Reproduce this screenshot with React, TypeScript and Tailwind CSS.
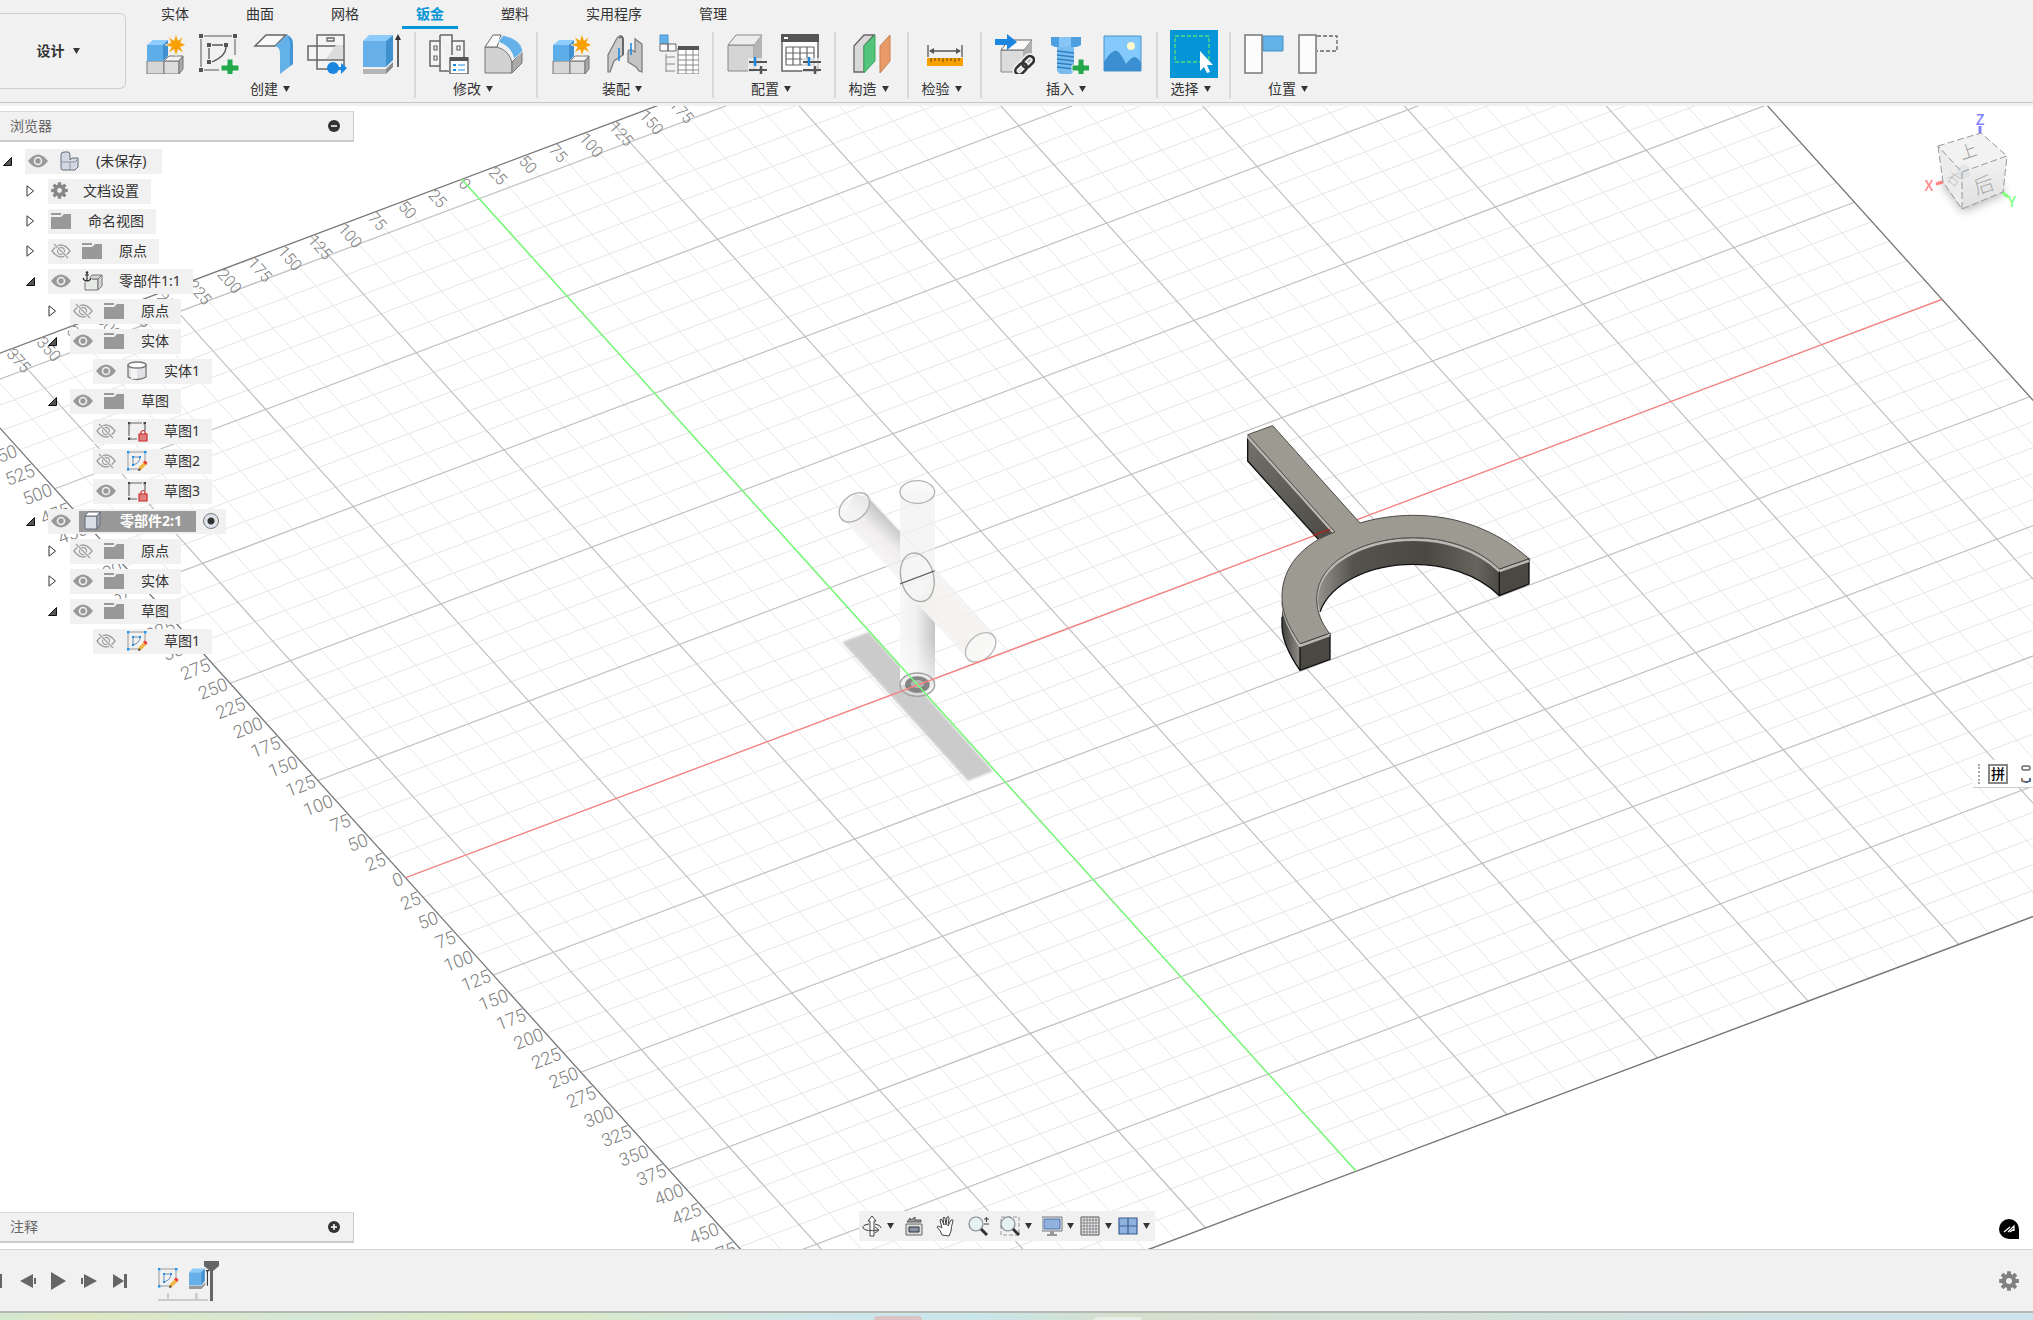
import { useState, type ReactNode } from 'react';
import { clsx } from 'clsx';

const FONT = "font-['Noto_Sans',_'Noto_Sans_CJK_SC',sans-serif]";

/* ---------- ribbon icons, all on a 40px grid ---------- */

function Box40({ children }: { children: ReactNode }) {
  return (
    <svg viewBox="0 0 40 40" className="h-10 w-10" fill="none" aria-hidden="true">
      {children}
    </svg>
  );
}

const Plus = ({ x, y }: { x: number; y: number }) => (
  <path
    d={`M${x - 3} ${y - 9}h6v6h6v6h-6v6h-6v-6h-6v-6h6z`}
    fill="#23a94b"
    stroke="#f1f1f1"
    strokeWidth="1"
  />
);

function NewComponentIcon() {
  return (
    <Box40>
      <path d="M2 27h17v13H2z" fill="#d6d6d6" stroke="#777" />
      <path d="M19 27h15v13H19z" fill="#dcdcdc" stroke="#777" />
      <path d="M19 27l5-5h14l-4 5z" fill="#f2f2f2" stroke="#777" />
      <path d="M34 27l4-5v13l-4 5z" fill="#aaa" stroke="#777" />
      <path d="M2 11h16v16H2z" fill="#5dade8" />
      <path d="M2 11l6-5h15l-5 5z" fill="#90cdff" />
      <path d="M18 11l5-5v16l-5 5z" fill="#3d8fd0" />
      <path
        d="M31 0l2 6.500 5-3.500-2.500 5.500L41 11l-5.500 2 3 5.500-5.500-3L31 22l-2-6.500-5.500 3 3-5.500L20 11l6-2.500L23.500 3l5.500 3.500z"
        fill="#f7a000"
        stroke="#f1f1f1"
        strokeWidth=".6"
      />
    </Box40>
  );
}

function SketchIcon() {
  return (
    <Box40>
      <path d="M5 2h28M2 5v28M5 36h15M36 5v16" stroke="#555" />
      <path d="M13 11h11M10 14v11M27 13q0 9-14 15" stroke="#555" strokeWidth="1.300" />
      <path d="M0 0h4v4H0zM34 0h4v4h-4zM0 34h4v4H0zM8 9h4v4H8zM25 9h4v4h-4zM8 26h4v4H8z" fill="#555" />
      <Plus x={31} y={34} />
    </Box40>
  );
}

function FlangeIcon() {
  return (
    <Box40>
      <path d="M2 12L13 1h20L22 12z" fill="#fafafa" stroke="#666" strokeWidth="1.500" />
      <path d="M22 12L34 1q6 2 6 10v19L27 40V20q0-7-5-8z" fill="#64b0e8" />
      <path d="M34 1q6 2 6 10v19l-3 2V11q0-7-3-10z" fill="#4596d6" />
    </Box40>
  );
}

function UnfoldIcon() {
  return (
    <Box40>
      <path d="M10 1h27v34H10zM1 12h36v14H1zM10 12v14" fill="#f4f4f4" stroke="#666" strokeWidth="1.500" />
      <path d="M19 25l10-14h7v14z" fill="#dcdcdc" />
      <path d="M20 4h7v3h-7z" stroke="#666" strokeWidth="1.300" />
      <circle cx="26" cy="34" r="6" fill="#1a86e0" />
      <path d="M30 33h4v-4l6 5-6 6v-4h-4z" fill="#1a86e0" />
    </Box40>
  );
}

function ExtrudeIcon() {
  return (
    <Box40>
      <path d="M2 35h23v5H2z" fill="#b5b5b5" />
      <path d="M25 35l7-7v5l-7 7z" fill="#8a8a8a" />
      <path d="M2 7h23v26H2z" fill="#66afe8" />
      <path d="M2 7l6-6h24l-7 6z" fill="#8dccfa" />
      <path d="M25 7l7-6v25l-7 7z" fill="#3f90cf" />
      <path d="M37 4v29" stroke="#333" strokeWidth="1.500" />
      <path d="M37 0l3 6h-6z" fill="#333" />
    </Box40>
  );
}

function RulesIcon() {
  return (
    <Box40>
      <path d="M11 1h12v6h12v16M11 1v6H1v25h10v5h9" fill="#f5f5f5" stroke="#666" strokeWidth="1.500" />
      <path d="M11 7v25M23 7v14" stroke="#666" strokeWidth="1.500" />
      <path d="M5 12h3v4H5zM5 22h3v4H5zM28 12h3v4h-3z" stroke="#666" strokeWidth="1.200" />
      <path d="M21 24h18v16H21z" fill="#fff" stroke="#666" strokeWidth="1.500" />
      <path d="M21 23h18v4H21z" fill="#555" />
      <path d="M24 31h3M24 36h3" stroke="#1a86e0" strokeWidth="2" />
      <path d="M29 31h7M29 36h7" stroke="#1a86e0" />
    </Box40>
  );
}

function BendIcon() {
  return (
    <Box40>
      <path d="M2 39V13h12q13 4 15 16v10z" fill="#d2d2d2" stroke="#777" />
      <path d="M2 13L10 1h8l-4 12z" fill="#fafafa" stroke="#666" />
      <path d="M29 28l10-10v11L29 39z" fill="#aaa" stroke="#777" />
      <path d="M15 8l5-7q18 4 20 16l-9 8Q28 12 15 8z" fill="#64b0e8" stroke="#f1f1f1" />
    </Box40>
  );
}

function JointIcon() {
  return (
    <Box40>
      <path d="M3 38V21L12 4q4-5 6 0v17l-9 6-4 11z" fill="#ccc" stroke="#777" strokeWidth="1.200" />
      <path d="M14 4q4-3 4 2v15" stroke="#555" strokeWidth="1.500" />
      <path d="M37 38V10l-7-5v13q-7-5-7 1v9l8 5 3 4z" fill="#c4c4c4" stroke="#777" strokeWidth="1.200" />
      <path d="M14 14v13M26 9v12" stroke="#1a86e0" strokeWidth="1.500" />
    </Box40>
  );
}

function BomIcon() {
  return (
    <Box40>
      <path d="M1 1h8v9H1z" fill="#64b0e8" stroke="#4b93ca" />
      <path d="M1 10h8v7H1zM9 10h8v7H9z" fill="#fafafa" stroke="#666" />
      <path d="M7 20v18M7 23h9M7 30h9M7 37h9" stroke="#888" />
      <path d="M19 14h21v26H19z" fill="#fff" stroke="#777" />
      <path d="M19 12h21v4H19z" fill="#555" />
      <path d="M19 21h21M19 26h21M19 31h21M19 36h21M27 16v24M34 16v24" stroke="#888" />
    </Box40>
  );
}

function Sliders({ x, y }: { x: number; y: number }) {
  return (
    <g transform={`translate(${x} ${y})`}>
      <path d="M-1-1h20v14H-1z" fill="#f1f1f1" opacity=".7" />
      <path d="M0 3h18M0 11h18" stroke="#555" strokeWidth="1.800" />
      <path d="M6-2v9" stroke="#1a86e0" strokeWidth="2.500" />
      <path d="M12 7v8" stroke="#555" strokeWidth="2.500" />
    </g>
  );
}

function ConfigBodyIcon() {
  return (
    <Box40>
      <path d="M1 11h26v26H1z" fill="#d5d5d5" stroke="#888" />
      <path d="M1 11L9 1h26l-8 10z" fill="#ededed" stroke="#888" />
      <path d="M27 11l8-10v26l-8 10z" fill="#b5b5b5" />
      <Sliders x={22} y={25} />
    </Box40>
  );
}

function ConfigTableIcon() {
  return (
    <Box40>
      <path d="M1 1h36v36H1z" fill="#fff" stroke="#666" strokeWidth="1.500" />
      <path d="M0 0h38v8H0z" fill="#555" />
      <path d="M3 3h4v2H3z" fill="#fff" />
      <path d="M5 13h28v18H5zM5 19h28M5 25h28M12 13v18M19 13v18M26 13v18" stroke="#666" strokeWidth="1.200" />
      <Sliders x={22} y={25} />
    </Box40>
  );
}

function PlaneIcon() {
  return (
    <Box40>
      <path d="M2 12L12 1h10L12 12v26H2z" fill="#d9d9d9" stroke="#666" strokeWidth="1.300" />
      <path d="M12 12L23 1v26L12 39z" fill="#53c57a" stroke="#3ca862" />
      <path d="M28 12L38 1v26L28 39z" fill="#e89a67" stroke="#c97f50" />
    </Box40>
  );
}

function MeasureIcon() {
  return (
    <Box40>
      <path d="M3 11v12M37 11v12M5 17h30" stroke="#555" strokeWidth="1.300" />
      <path d="M4 17l5-3v6zM36 17l-5-3v6z" fill="#555" />
      <path d="M2 24h36v8H2z" fill="#f7a000" />
      <path d="M6 24v4M10 24v3M14 24v3M18 24v4M22 24v3M26 24v3M30 24v4M34 24v3" stroke="#6b4700" />
    </Box40>
  );
}

function DeriveIcon() {
  return (
    <Box40>
      <path d="M6 16h23v22H6z" fill="#dcdcdc" stroke="#888" />
      <path d="M6 16L14 6h23l-8 10z" fill="#fafafa" stroke="#666" />
      <path d="M29 16l8-10v20l-8 12z" fill="#b0b0b0" />
      <path d="M0 5h12V0l10 8-10 8v-5H0z" fill="#1a86e0" />
      <g transform="rotate(-45 30 31)" stroke="#f1f1f1" strokeWidth="6">
        <rect x="18" y="27" width="13" height="8" rx="4" />
        <rect x="28" y="27" width="13" height="8" rx="4" />
      </g>
      <g transform="rotate(-45 30 31)" stroke="#333" strokeWidth="2.600">
        <rect x="18" y="27" width="13" height="8" rx="4" />
        <rect x="28" y="27" width="13" height="8" rx="4" />
      </g>
    </Box40>
  );
}

function FastenerIcon() {
  return (
    <Box40>
      <path d="M2 3h30v8l-4 2H6l-4-2z" fill="#4d9fdf" />
      <path d="M10 3h12v10H10z" fill="#86c5f5" />
      <path d="M8 13h17v24l-3 3H11l-3-3z" fill="#79bcf0" />
      <path d="M8 17l17 2M8 21l17 2M8 25l17 2M8 29l17 2M8 33l17 2" stroke="#2f80c0" strokeWidth="1.400" />
      <Plus x={32} y={34} />
    </Box40>
  );
}

function CanvasIcon() {
  return (
    <Box40>
      <path d="M1 2h37v35H1z" fill="#83c9fb" stroke="#4b93ca" />
      <path d="M1 28q8-13 13-11 3 1 9 13 6-8 9-7 3 1 6 5v9H1z" fill="#3c8fd0" />
      <circle cx="28" cy="12" r="4" fill="#fdf9cf" />
    </Box40>
  );
}

function SelectIcon() {
  return (
    <Box40>
      <path d="M1 2h34v26H1z" stroke="#54dc80" strokeWidth="1.400" strokeDasharray="4 2" />
      <path d="M26 17v20l4-4 3 6 3-1-3-7h6z" fill="#fff" />
    </Box40>
  );
}

const AlignIcon = ({ dashed }: { dashed?: boolean }) => (
  <Box40>
    {dashed ? (
      <path d="M19 2h20v15H19" stroke="#666" strokeWidth="1.300" strokeDasharray="4 2" />
    ) : (
      <path d="M19 2h20v15H19z" fill="#64b0e8" stroke="#4b93ca" />
    )}
    <path d="M1 1h17v38H1z" fill="#fcfcfc" stroke="#777" strokeWidth="1.500" />
  </Box40>
);

/* ---------- ribbon ---------- */

const TABS = ['实体', '曲面', '网格', '钣金', '塑料', '实用程序', '管理'];

const GROUPS: { label: string; tools: { name: string; icon: ReactNode; on?: boolean }[] }[] = [
  {
    label: '创建',
    tools: [
      { name: '新建零部件', icon: <NewComponentIcon /> },
      { name: '创建草图', icon: <SketchIcon /> },
      { name: '凸缘', icon: <FlangeIcon /> },
      { name: '展开模式', icon: <UnfoldIcon /> },
      { name: '拉伸', icon: <ExtrudeIcon /> },
    ],
  },
  {
    label: '修改',
    tools: [
      { name: '钣金规则', icon: <RulesIcon /> },
      { name: '圆角', icon: <BendIcon /> },
    ],
  },
  {
    label: '装配',
    tools: [
      { name: '新建零部件', icon: <NewComponentIcon /> },
      { name: '联接', icon: <JointIcon /> },
      { name: '明细表', icon: <BomIcon /> },
    ],
  },
  {
    label: '配置',
    tools: [
      { name: '配置设计', icon: <ConfigBodyIcon /> },
      { name: '配置表', icon: <ConfigTableIcon /> },
    ],
  },
  { label: '构造', tools: [{ name: '偏移平面', icon: <PlaneIcon /> }] },
  { label: '检验', tools: [{ name: '测量', icon: <MeasureIcon /> }] },
  {
    label: '插入',
    tools: [
      { name: '插入衍生', icon: <DeriveIcon /> },
      { name: '插入紧固件', icon: <FastenerIcon /> },
      { name: '画布', icon: <CanvasIcon /> },
    ],
  },
  { label: '选择', tools: [{ name: '窗口选择', icon: <SelectIcon />, on: true }] },
  {
    label: '位置',
    tools: [
      { name: '捕获位置', icon: <AlignIcon /> },
      { name: '还原位置', icon: <AlignIcon dashed /> },
    ],
  },
];

const Caret = ({ className }: { className?: string }) => (
  <svg viewBox="0 0 8 7" className={clsx('h-[6px] w-[7px] shrink-0', className)} aria-hidden="true">
    <path d="M0 0h8L4 7z" fill="#333" />
  </svg>
);

function Ribbon() {
  const [tab, setTab] = useState('钣金');
  return (
    <header className="h-[106px] shrink-0 bg-[#f1f1f1] pb-[3px]">
      <div className="flex h-[103px] border-b border-[#c8c8c8]">
        <button
          type="button"
          className="-ml-px mt-[13px] flex h-[76px] w-[127px] shrink-0 items-center justify-center gap-2 rounded-r-md border border-l-0 border-[#cfcfcf] pr-2 text-sm font-semibold text-[#333]"
        >
          设计
          <Caret />
        </button>
        <div className="ml-[6px] flex flex-col">
          <nav className="ml-[15px] flex h-[30px] gap-[29px]">
            {TABS.map((t) => (
              <button
                key={t}
                type="button"
                onClick={() => setTab(t)}
                className={clsx(
                  'h-[29px] whitespace-nowrap border-b-[3px] px-[14px] pt-[2px] text-sm',
                  t === tab
                    ? 'border-[#0696d7] font-semibold text-[#0696d7]'
                    : 'border-transparent text-[#333]',
                )}
              >
                {t}
              </button>
            ))}
          </nav>
          <div className="mt-[2px] flex">
            {GROUPS.map((g, i) => (
              <section
                key={g.label}
                className={clsx(
                  'flex h-[66px] flex-col items-center',
                  g.tools.length === 1 ? 'w-[73px]' : 'px-[6px]',
                  i < GROUPS.length - 1 && 'border-r-2 border-[#d8d8d8]',
                )}
              >
                <div className="flex h-[44px]">
                  {g.tools.map((t, n) => (
                    <button
                      key={n}
                      type="button"
                      aria-label={t.name}
                      className="flex h-[44px] w-[54px] items-center justify-center"
                    >
                      <span
                        className={clsx(
                          'flex h-12 w-12 shrink-0 items-center justify-center',
                          t.on && 'bg-[#0696d7]',
                        )}
                      >
                        {t.icon}
                      </span>
                    </button>
                  ))}
                </div>
                <button type="button" className="mr-[6px] mt-[3px] flex items-center gap-[5px] text-sm text-[#333]">
                  {g.label}
                  <Caret />
                </button>
              </section>
            ))}
          </div>
        </div>
      </div>
    </header>
  );
}

/* ---------- browser tree ---------- */

type Glyph = 'doc' | 'gear' | 'folder' | 'anchor' | 'body' | 'locked' | 'sketch' | 'part';

type Row = {
  level: 0 | 1 | 2 | 3;
  text: string;
  glyph: Glyph;
  open?: boolean;
  eye?: 'on' | 'off';
  active?: boolean;
};

const ROWS: Row[] = [
  { level: 0, text: '(未保存)', glyph: 'doc', open: true, eye: 'on' },
  { level: 1, text: '文档设置', glyph: 'gear', open: false },
  { level: 1, text: '命名视图', glyph: 'folder', open: false },
  { level: 1, text: '原点', glyph: 'folder', open: false, eye: 'off' },
  { level: 1, text: '零部件1:1', glyph: 'anchor', open: true, eye: 'on' },
  { level: 2, text: '原点', glyph: 'folder', open: false, eye: 'off' },
  { level: 2, text: '实体', glyph: 'folder', open: true, eye: 'on' },
  { level: 3, text: '实体1', glyph: 'body', eye: 'on' },
  { level: 2, text: '草图', glyph: 'folder', open: true, eye: 'on' },
  { level: 3, text: '草图1', glyph: 'locked', eye: 'off' },
  { level: 3, text: '草图2', glyph: 'sketch', eye: 'off' },
  { level: 3, text: '草图3', glyph: 'locked', eye: 'on' },
  { level: 1, text: '零部件2:1', glyph: 'part', open: true, eye: 'on', active: true },
  { level: 2, text: '原点', glyph: 'folder', open: false, eye: 'off' },
  { level: 2, text: '实体', glyph: 'folder', open: false, eye: 'on' },
  { level: 2, text: '草图', glyph: 'folder', open: true, eye: 'on' },
  { level: 3, text: '草图1', glyph: 'sketch', eye: 'off' },
];

const INDENT = ['pl-[3px]', 'pl-[26px]', 'pl-[48px]', 'pl-[71px]'];

function Eye({ off }: { off?: boolean }) {
  return (
    <svg viewBox="0 0 20 16" className="h-4 w-5" fill="none" aria-hidden="true">
      {off ? (
        <>
          <path d="M1 8q9-12 18 0-9 12-18 0z" stroke="#a0a0a0" strokeWidth="1.300" />
          <circle cx="10" cy="8" r="3.500" stroke="#a0a0a0" strokeWidth="1.300" />
          <path d="M3 1l14 14" stroke="#f1f1f1" strokeWidth="3" />
          <path d="M3 1l14 14" stroke="#a0a0a0" strokeWidth="1.300" />
        </>
      ) : (
        <>
          <path d="M0 8q10-13 20 0-10 13-20 0z" fill="#999" />
          <circle cx="10" cy="8" r="3.500" stroke="#f1f1f1" strokeWidth="1.600" />
        </>
      )}
    </svg>
  );
}

function gearPath(cx: number, cy: number, r: number, hole: number) {
  const pts: string[] = [];
  for (let i = 0; i < 8; i++) {
    const a = (i * Math.PI) / 4;
    [[-0.28, 0.72], [-0.19, 1], [0.19, 1], [0.28, 0.72]].forEach(([d, k]) =>
      pts.push(`${(cx + Math.sin(a + d) * r * k).toFixed(2)} ${(cy - Math.cos(a + d) * r * k).toFixed(2)}`),
    );
  }
  return `M${pts.join('L')}ZM${cx - hole} ${cy}a${hole} ${hole} 0 1 0 ${2 * hole} 0a${hole} ${hole} 0 1 0 ${-2 * hole} 0z`;
}

const TREE_GLYPHS: Record<Glyph, ReactNode> = {
  doc: (
    <>
      <path d="M2 4q0-3 3-3h4q2 0 2 3v5l2-2h6v9l-3 3H4q-2 0-2-2z" fill="#d3d8e3" stroke="#666c7a" />
      <path d="M2 11h9v8M11 11h5l3-3" stroke="#8a90a0" />
    </>
  ),
  gear: <path d={gearPath(8.5, 9.5, 8.5, 2.4)} fill="#888" fillRule="evenodd" />,
  folder: (
    <path d="M0 2h10v2H0zM0 6h10l3-3h7v15H0z" fill="#999" />
  ),
  anchor: (
    <>
      <path d="M3 8h13v11H3z" fill="#e6e9e6" stroke="#777" />
      <path d="M16 8l4-4v11l-4 4zM16 8H7l3-4h10z" fill="#d3d7d3" stroke="#777" />
      <path d="M5 2v8M3 4h4M1 7q1 3 4 3t4-3" stroke="#f1f1f1" strokeWidth="3" />
      <path d="M5 2v8M3 4h4M1 7q1 3 4 3t4-3" stroke="#333" strokeWidth="1.200" />
      <circle cx="5" cy="1.500" r="1.200" fill="#333" />
    </>
  ),
  body: (
    <>
      <path d="M1 4v12q9 5 18 0V4z" fill="#e2e2e6" stroke="#777" strokeWidth="1.300" />
      <path d="M4 7h6v11H4z" fill="#fafafa" opacity=".8" />
      <ellipse cx="10" cy="4" rx="9" ry="3" fill="#fff" stroke="#777" strokeWidth="1.300" />
    </>
  ),
  locked: (
    <>
      <path d="M4 2h11M2 4v11M18 4v6M4 18h6" stroke="#666" strokeWidth="1.200" />
      <path d="M1 1h2.500v2.500H1zM16.500 1H19v2.500h-2.500zM1 16.500h2.500V19H1z" fill="#444" />
      <path d="M12 13h8v7h-8z" fill="#e08080" stroke="#cc2b2b" strokeWidth="1.200" />
      <path d="M14 13v-2q2-3 4 0v2" stroke="#cc2b2b" strokeWidth="1.200" />
    </>
  ),
  sketch: (
    <>
      <path d="M3 1h14M1 3v14M18 3v8M3 18h9" stroke="#999" />
      <path d="M6 6h7q0 6-7 8z" stroke="#6b8dab" />
      <path
        d="M0 0h2.500v2.500H0zM17 0h2.500v2.500H17zM0 17h2.500v2.500H0zM5 5h2v2H5zM12 5h2v2h-2zM5 13h2v2H5z"
        fill="#2090e8"
      />
      <path d="M11 20l1-4 5-5 3 2-6 6z" fill="#f2b743" />
      <path d="M16 11l2-1.500 2.500 2L19 14z" fill="#f03c3c" />
      <path d="M11 20l1-3 2 2z" fill="#444" />
    </>
  ),
  part: (
    <>
      <path d="M2 5h12v13H3q-1 0-1-1z" fill="#d9dfe8" stroke="#666c7a" />
      <path d="M2 5l3-4h11q1 0 1 1l-3 3z" fill="#fff" stroke="#666c7a" />
      <path d="M14 5l3-4v13l-3 4z" fill="#a3abb9" stroke="#666c7a" />
    </>
  ),
};

function TreeGlyph({ glyph }: { glyph: Glyph }) {
  return (
    <svg viewBox="0 0 21 21" className="h-[21px] w-[21px] shrink-0" fill="none" aria-hidden="true">
      {TREE_GLYPHS[glyph]}
    </svg>
  );
}

function TreeRow({ row }: { row: Row }) {
  return (
    <li className={clsx('flex h-[30px] items-center', INDENT[row.level])}>
      <span className="flex w-[22px] shrink-0">
        {row.open !== undefined && (
          <button type="button" aria-label={row.open ? '折叠' : '展开'}>
            <svg viewBox="0 0 10 12" className="h-3 w-[10px]" aria-hidden="true">
              {row.open ? (
                <path d="M.5 10.500h8v-8z" fill="#555" stroke="#111" />
              ) : (
                <path d="M1 .8v10.400L7.500 6z" fill="#fff" stroke="#333" />
              )}
            </svg>
          </button>
        )}
      </span>
      <div className="flex h-[25px] items-center bg-[#f1f1f1]">
        {row.eye && (
          <button type="button" aria-label="可见性" className="flex w-[31px] pl-[3px]">
            <Eye off={row.eye === 'off'} />
          </button>
        )}
        <button
          type="button"
          className={clsx(
            'flex items-center whitespace-nowrap text-sm',
            row.glyph === 'gear' ? 'gap-[11px]' : 'gap-[16px]',
            row.active
              ? 'h-[21px] bg-[#999] pl-[4px] pr-[14px] font-bold text-white'
              : 'h-[25px] pl-[3px] text-[#333]',
            !row.active && (row.level === 0 ? 'pr-[16px]' : 'pr-[12px]'),
          )}
        >
          <TreeGlyph glyph={row.glyph} />
          {row.text}
        </button>
        {row.active && (
          <label className="mx-[7px] flex">
            <input
              type="radio"
              defaultChecked
              aria-label="激活零部件"
              className="h-4 w-4 appearance-none rounded-full border border-[#777] bg-[radial-gradient(circle,#333_0_3px,#dfe3ec_4px)]"
            />
          </label>
        )}
      </div>
    </li>
  );
}

function PanelBar({ title, plus }: { title: string; plus?: boolean }) {
  return (
    <div className="flex h-[31px] w-[354px] items-center justify-between border-b-2 border-r border-t border-[#ccc] border-t-[#d8d8d8] bg-[#f1f1f1] pl-[10px] pr-[13px]">
      <h2 className="text-sm text-[#666]">{title}</h2>
      <button type="button" aria-label={plus ? '展开面板' : '折叠面板'}>
        <svg viewBox="0 0 12 12" className="h-3 w-3" aria-hidden="true">
          <circle cx="6" cy="6" r="6" fill="#333" />
          <path d={plus ? 'M3 6h6M6 3v6' : 'M3 6h6'} stroke="#fff" strokeWidth="1.500" />
        </svg>
      </button>
    </div>
  );
}

/* ---------- 3D view ---------- */

const ORIGIN = { x: 917.7, y: 685 };
const U = { x: 30.13, y: -11.34 };
const V = { x: 17.54, y: 19.45 };
const U_MIN = -17;
const U_MAX = 34;
const V_MIN = -26;
const V_MAX = 25;

const at = (u: number, v: number) => ({
  x: ORIGIN.x + u * U.x + v * V.x,
  y: ORIGIN.y + u * U.y + v * V.y,
});

function seg(u1: number, v1: number, u2: number, v2: number) {
  const a = at(u1, v1);
  const b = at(u2, v2);
  return `M${a.x.toFixed(1)} ${a.y.toFixed(1)}L${b.x.toFixed(1)} ${b.y.toFixed(1)}`;
}

const range = (a: number, b: number) => Array.from({ length: b - a + 1 }, (_, i) => a + i);

// rulers stop where the grid leaves the view
const LEFT_RULER = range(-22, 19);
const TOP_RULER = range(-15, 7);

function Grid() {
  let minor = '';
  let major = '';
  range(U_MIN, U_MAX).forEach((u) => {
    if (u % 5) minor += seg(u, V_MIN, u, V_MAX);
    else major += seg(u, V_MIN, u, V_MAX);
  });
  range(V_MIN, V_MAX).forEach((v) => {
    if (v % 5) minor += seg(U_MIN, v, U_MAX, v);
    else major += seg(U_MIN, v, U_MAX, v);
  });
  const border =
    seg(U_MIN, V_MIN, U_MAX, V_MIN) +
    seg(U_MIN, V_MAX, U_MAX, V_MAX) +
    seg(U_MIN, V_MIN, U_MIN, V_MAX) +
    seg(U_MAX, V_MIN, U_MAX, V_MAX);
  return (
    <g fill="none">
      <path d={minor} stroke="#e6e6e6" />
      <path d={major} stroke="#c0c0c0" strokeWidth="1.200" />
      <path d={border} stroke="#777" strokeWidth="1.300" />
      <g fill="#7d7d7d" className="font-['Roboto',sans-serif] font-light">
        {LEFT_RULER.map((v) => {
          const p = at(U_MIN, v);
          return (
            <text
              key={v}
              textAnchor="end"
              fontSize="18"
              transform={`translate(${p.x - 1} ${p.y + 6}) rotate(-21)`}
            >
              {Math.abs(v * 25)}
            </text>
          );
        })}
        {TOP_RULER.map((u) => {
          const p = at(u, V_MIN);
          return (
            <text
              key={u}
              fontSize="16"
              transform={`translate(${p.x - 4} ${p.y + 5}) rotate(48)`}
            >
              {Math.abs(u * 25)}
            </text>
          );
        })}
      </g>
    </g>
  );
}

// glass cross, drawn at triple scale
function Cross() {
  return (
    <g transform="translate(800 440) scale(.33333)" fill="none">
      <defs>
        <linearGradient id="tubeLow" x1="0" x2="1">
          <stop offset="0" stopColor="#f8f8f8" />
          <stop offset=".45" stopColor="#f0f0f0" />
          <stop offset="1" stopColor="#b8b8b8" />
        </linearGradient>
        <linearGradient id="tubeBack" gradientUnits="userSpaceOnUse" x1="195" y1="320" x2="270" y2="240">
          <stop offset="0" stopColor="#f7f6f5" />
          <stop offset=".5" stopColor="#eceae9" />
          <stop offset="1" stopColor="#b8b8b8" />
        </linearGradient>
        <linearGradient id="fadeDown" x1="0" y1="0" x2="0" y2="1">
          <stop offset="0" stopColor="#fff" stopOpacity="0" />
          <stop offset="1" stopColor="#fff" stopOpacity=".7" />
        </linearGradient>
      </defs>
      <path d="M125 235L163 160L209 178L300 276V424z" fill="url(#tubeBack)" opacity=".8" />
      <ellipse cx="163" cy="202" rx="52" ry="36" transform="rotate(-42 163 202)" fill="#f4f4f4" fillOpacity=".7" stroke="#b0b0b0" strokeWidth="4" />
      <path d="M300 155V735H405V155z" fill="#efefef" fillOpacity=".65" />
      <path d="M300 440L350 490L405 546V735H300z" fill="url(#tubeLow)" opacity=".8" />
      <path d="M300 600H405V735H300z" fill="url(#fadeDown)" />
      <path d="M405 393L585 592L500 655L355 494z" fill="#f1f0ee" fillOpacity=".75" />
      <ellipse cx="352" cy="156" rx="52" ry="34" fill="#f7f7f7" fillOpacity=".7" stroke="#b4b4b4" strokeWidth="4" />
      <ellipse cx="352" cy="412" rx="49" ry="74" transform="rotate(-14 352 412)" stroke="#ababab" strokeWidth="4" />
      <path d="M300 432L404 393" stroke="#666" strokeWidth="4" />
      <ellipse cx="542" cy="622" rx="52" ry="36" transform="rotate(-42 542 622)" fill="#f7f7f6" fillOpacity=".8" stroke="#b8b8b8" strokeWidth="4" />
      <ellipse cx="352" cy="734" rx="52" ry="35" fill="#e4e4e4" fillOpacity=".5" stroke="#a0a0a0" strokeWidth="4" />
      <ellipse cx="352" cy="734" rx="37" ry="25" fill="#858585" />
      <ellipse cx="352" cy="732" rx="20" ry="12" fill="#b4b4b4" />
    </g>
  );
}

const INNER = 'M898 507C830 440 730 413 640 413C500 413 348 480 350 600C351 640 365 668 388 700';

function Fork() {
  return (
    <g transform="translate(1200 400) scale(.33333)" strokeLinejoin="round">
      <defs>
        <linearGradient id="wall" x1="0" x2="1">
          <stop offset="0" stopColor="#96948c" />
          <stop offset=".2" stopColor="#55534d" />
          <stop offset=".6" stopColor="#4b4842" />
          <stop offset=".88" stopColor="#67645d" />
          <stop offset="1" stopColor="#4c4a44" />
        </linearGradient>
        <linearGradient id="arm" x1="0" y1="0" x2="1" y2="1">
          <stop offset="0" stopColor="#73716b" />
          <stop offset="1" stopColor="#4c4a45" />
        </linearGradient>
        <linearGradient id="outer" x1="0" x2="1">
          <stop offset="0" stopColor="#45433e" />
          <stop offset="1" stopColor="#8f8d86" />
        </linearGradient>
      </defs>
      <path d="M143 104L405 396L355 418L143 183z" fill="url(#arm)" />
      <path d="M143 110V183L355 418" fill="none" stroke="#111" strokeWidth="4" />
      <path d="M246 600V680C248 730 275 775 300 811V731z" fill="url(#outer)" />
      <path d="M246 650V680C248 730 275 775 300 811" fill="none" stroke="#111" strokeWidth="4" />
      <path d="M898 507V587C830 520 730 493 640 493C500 493 390 555 360 635L350 600C348 480 500 413 640 413C730 413 830 440 898 507z" fill="url(#wall)" />
      <path d="M898 587C830 520 730 493 640 493C500 493 390 555 360 635" fill="none" stroke="#111" strokeWidth="4" />
      <path d="M898 507L987 476V552L898 587z" fill="#4a4841" stroke="#111" strokeWidth="4" />
      <path d="M300 731L390 700V778L300 811z" fill="#4a4841" stroke="#111" strokeWidth="4" />
      <g fill="none" stroke="#b9b8b3" strokeWidth="8" transform="translate(0 6)">
        <path d="M143 104L405 396L357 416" />
        <path d={INNER} />
        <path d="M388 700L300 731C265 680 250 635 246 600M898 507L987 476" />
      </g>
      <path
        d="M143 104L218 77L480 369C530 354 585 346 640 346C770 346 890 390 987 476L898 507C830 440 730 413 640 413C500 413 348 480 350 600C351 640 365 668 388 700L300 731C258 670 246 630 246 590C246 500 310 430 405 396z"
        fill="#9d9a92"
        stroke="#4c4b47"
        strokeWidth="3"
      />
      <path d="M340 406L390 388" stroke="#b52020" strokeWidth="4" />
    </g>
  );
}

function ViewCube() {
  return (
    <g className="font-['Noto_Sans_CJK_SC',sans-serif]">
      <defs>
        <filter id="soft" x="-30%" y="-30%" width="160%" height="160%">
          <feGaussianBlur stdDeviation="5" />
        </filter>
        <linearGradient id="cubeFace" x1="0" y1="0" x2="0" y2="1">
          <stop offset="0" stopColor="#f2f2f2" />
          <stop offset="1" stopColor="#e0e0e0" />
        </linearGradient>
      </defs>
      <path d="M1940 182l23 30 42-18-10-20z" fill="#bbb" filter="url(#soft)" />
      <path d="M1980 134v-8" stroke="#8080ff" strokeWidth="3" />
      <path d="M1943 182l-7 2" stroke="#ff8080" strokeWidth="3" />
      <path d="M2002 192l6 5" stroke="#80ff80" strokeWidth="3" />
      <path d="M1938 146l24 26v37l-19-27z" fill="#ececec" />
      <path d="M1962 172l45-16-4 36-41 17z" fill="url(#cubeFace)" />
      <path d="M1938 146l43-13 26 23-45 16z" fill="#f2f2f2" />
      <path d="M1957 168l7-4 6 4v8l-8 4-5-5z" fill="#d9dde2" opacity=".6" />
      <path
        d="M1938 146l43-13 26 23-45 16zM1938 146l5 36 19 27 41-17 4-36M1962 172v37"
        fill="none"
        stroke="#999"
        strokeDasharray="7 3"
      />
      <g className="font-light" textAnchor="middle">
        <text fontSize="17" fill="#999" transform="translate(1970 157) rotate(-18)">上</text>
        <text fontSize="14" fill="#bbb" transform="translate(1951 183) rotate(35)">右</text>
        <text fontSize="20" fill="#aaa" transform="translate(1986 192) rotate(-18)">后</text>
      </g>
      <g fontSize="15" fontWeight="500" textAnchor="middle">
        <text x="1980" y="125" fill="#8080ff">Z</text>
        <text x="1929" y="191" fill="#ff8a8a">X</text>
        <text x="2012" y="207" fill="#7dff7d">Y</text>
      </g>
    </g>
  );
}

function Viewport() {
  return (
    <svg
      viewBox="0 106 2033 1143"
      preserveAspectRatio="xMinYMin slice"
      className="absolute inset-0 h-full w-full"
      role="img"
      aria-label="三维视图"
    >
      <defs>
        <filter id="shadowBlur">
          <feGaussianBlur stdDeviation="1" />
        </filter>
      </defs>
      <Grid />
      <path d="M842 642L869 632L993 771L968 781z" fill="#c4c4c4" opacity=".88" filter="url(#shadowBlur)" />
      <Cross />
      <path d={seg(U_MIN, 0, U_MAX, 0)} stroke="#ff8080" strokeWidth="1.200" />
      <path d={seg(0, V_MIN, 0, V_MAX)} stroke="#74ff74" strokeWidth="1.400" />
      <Fork />
      <ViewCube />
    </svg>
  );
}

/* ---------- navigation bar ---------- */

const lens = (
  <>
    <circle cx="8" cy="8" r="7" fill="#e3f3f1" stroke="#888" strokeWidth="1.200" />
    <path d="M13 13l6 6" stroke="#333" strokeWidth="3" />
  </>
);

const NAV: { name: string; w: string; menu?: boolean; icon: ReactNode }[] = [
  {
    name: '动态观察',
    w: 'w-[42px]',
    menu: true,
    icon: (
      <>
        <path d="M8 20V5H6l4-5 4 5h-2v15z" fill="#fff" stroke="#444" />
        <path d="M7 8q-7 1-6 4 3 4 15 2M13 8q6 1 6 4M13 11l4 3-4 3" stroke="#444" />
      </>
    ),
  },
  {
    name: '观察方向',
    w: 'w-[32px]',
    icon: (
      <>
        <path d="M2 8h16v11H2z" fill="#ddd" stroke="#666" />
        <path d="M5 11h10v5H5z" fill="#8793a5" stroke="#333" />
        <path d="M3 6l3-4 1 2 4-3v3h6v2z" fill="#999" stroke="#555" />
      </>
    ),
  },
  {
    name: '平移',
    w: 'w-[32px]',
    icon: (
      <path
        d="M6 19Q5 15 1 11q1-2 5 1L4 4q1-2 2 0l2 5-1-7q1-2 2 0l1 7 1-8q2-1 2 1l-1 8 3-6q2-1 2 1-2 6-2 10l-2 5z"
        fill="#fff"
        stroke="#444"
      />
    ),
  },
  {
    name: '缩放',
    w: 'w-[32px]',
    icon: (
      <>
        {lens}
        <path d="M16 3h5M18.500 1v5M16 8h5" stroke="#444" strokeWidth="1.200" />
      </>
    ),
  },
  {
    name: '窗口缩放',
    w: 'w-[42px]',
    menu: true,
    icon: (
      <>
        <path d="M1 1h18v18H1z" stroke="#999" strokeDasharray="4 2" />
        {lens}
      </>
    ),
  },
  {
    name: '显示设置',
    w: 'w-[38px]',
    menu: true,
    icon: (
      <>
        <path d="M0 1h20v14H0z" fill="#eee" stroke="#777" />
        <path d="M2 3h16v10H2z" fill="#8fb2df" stroke="#4a6ea5" />
        <path d="M8 15h4v3H8zM5 18h10v2H5z" fill="#999" />
      </>
    ),
  },
  {
    name: '栅格和捕捉',
    w: 'w-[38px]',
    menu: true,
    icon: (
      <>
        <path d="M1 1h18v18H1z" fill="#eef0f4" stroke="#555" />
        <path d="M4 1v18M7 1v18M10 1v18M13 1v18M16 1v18M1 4h18M1 7h18M1 10h18M1 13h18M1 16h18" stroke="#888" />
      </>
    ),
  },
  {
    name: '视口',
    w: 'w-[37px]',
    menu: true,
    icon: (
      <path
        d="M1 2h9v8H1zM10 2h9v8h-9zM1 10h9v8H1zM10 10h9v8h-9z"
        fill="#8fb2df"
        stroke="#3d5f94"
        strokeWidth="1.200"
      />
    ),
  },
];

function NavBar() {
  return (
    <div className="flex h-[30px] bg-[#f1f1f1] pl-[3px]">
      {NAV.map((n) => (
        <button key={n.name} type="button" aria-label={n.name} className={clsx('flex items-center gap-[4px]', n.w)}>
          <svg viewBox="0 0 21 21" className="h-[21px] w-[21px] shrink-0" fill="none" aria-hidden="true">
            {n.icon}
          </svg>
          {n.menu && <Caret />}
        </button>
      ))}
    </div>
  );
}

function ImeBar() {
  return (
    <div className="absolute right-0 top-[654px] flex h-[28px] w-[60px] items-center overflow-hidden border-b border-[#ccc] bg-white">
      <span className="ml-[5px] h-5 shrink-0 border-l-2 border-dotted border-[#aaa]" />
      <span className="ml-[8px] flex h-5 w-5 shrink-0 items-center justify-center border-2 border-[#888] text-sm font-medium leading-none text-black">
        拼
      </span>
      <svg viewBox="0 0 10 20" className="ml-[13px] h-5 w-[10px] shrink-0" fill="none" aria-hidden="true">
        <rect x="1" y="2" width="8" height="4" rx="2" stroke="#666" strokeWidth="1.500" />
        <path d="M1 14v3q4 2 8 0v-3" stroke="#445a88" strokeWidth="1.800" />
        <path d="M1 14v3h3" stroke="#c98a4a" strokeWidth="1.200" />
      </svg>
    </div>
  );
}

/* ---------- timeline ---------- */

const PLAY = [
  { name: '后退', d: 'M14 1v14L1 8zM15 5h2v6h-2z' },
  { name: '播放', d: 'M1-1v18L16 8z' },
  { name: '前进', d: 'M0 5h2v6H0zM3 1v14l13-7z' },
  { name: '转到末尾', d: 'M1 1v14l11-7zM12 1h3v14h-3z' },
];

function Timeline() {
  return (
    <footer className="flex h-[62px] shrink-0 items-center border-t border-[#d4d4d4] bg-[#f1f1f1]">
      <button type="button" aria-label="转到开头" className="h-[14px] w-[2px] bg-[#666]" />
      <div className="ml-[17px] flex gap-[13px]">
        {PLAY.map((p) => (
          <button key={p.name} type="button" aria-label={p.name} className="flex">
            <svg viewBox="0 0 18 16" className="h-4 w-[18px] overflow-visible" aria-hidden="true">
              <path d={p.d} fill="#666" />
            </svg>
          </button>
        ))}
      </div>
      <div className="ml-[28px] flex h-[40px] items-start">
        <div className="flex h-[40px] flex-col justify-between pt-[7px]">
          <div className="flex gap-[9px]">
            <button type="button" aria-label="草图1">
              <TreeGlyph glyph="sketch" />
            </button>
            <button type="button" aria-label="拉伸1">
              <svg viewBox="0 0 40 40" className="h-[21px] w-[21px]" fill="none" aria-hidden="true">
                <path d="M2 34h24l7-7v5l-7 8H2z" fill="#999" />
                <path d="M2 8h23v25H2z" fill="#66afe8" />
                <path d="M2 8l7-7h23l-7 7z" fill="#8dccfa" />
                <path d="M25 8l7-7v24l-7 8z" fill="#3f90cf" />
                <path d="M37 5v29M34 5h6" stroke="#333" strokeWidth="2" />
              </svg>
            </button>
          </div>
          <svg viewBox="0 0 50 8" className="h-2 w-[50px]" aria-hidden="true">
            <path d="M0 6h50v2H0zM9 0h2v6H9zM37 0h3v6h-3z" fill="#ccc" />
          </svg>
        </div>
        <svg viewBox="0 0 15 40" className="-ml-[5px] h-[40px] w-[15px]" aria-label="历史标记" role="img">
          <path d="M0 0h15v5L9 10v30H6V10L0 5z" fill="#666" />
        </svg>
      </div>
      <button type="button" aria-label="时间轴设置" className="ml-auto mr-[14px]">
        <svg viewBox="0 0 20 20" className="h-5 w-5" aria-hidden="true">
          <path d={gearPath(10, 10, 10, 3)} fill="#808080" fillRule="evenodd" />
        </svg>
      </button>
    </footer>
  );
}

export default function App() {
  return (
    <div className={clsx('flex h-screen flex-col overflow-hidden bg-white', FONT)}>
      <Ribbon />
      <main className="relative flex min-h-0 flex-1 flex-col">
        <Viewport />
        <div className="relative mt-[5px] flex flex-1 flex-col items-start">
          <PanelBar title="浏览器" />
          <ul className="mt-1">
            {ROWS.map((r, i) => (
              <TreeRow key={i} row={r} />
            ))}
          </ul>
        </div>
        <div className="relative mb-[6px] grid grid-cols-[354px_1fr_354px] items-end">
          <PanelBar title="注释" plus />
          <div className="mb-[2px] flex justify-center pr-[20px]">
            <NavBar />
          </div>
          <button type="button" aria-label="助手" className="mb-[4px] mr-[14px] justify-self-end">
            <svg viewBox="0 0 20 20" className="h-5 w-5" aria-hidden="true">
              <path d="M20 20H10A10 10 0 1 1 20 10z" fill="#000" />
              <path d="M5 13l6-5M9 13l6-6v5M11 13l4-3" stroke="#fff" strokeWidth="1.200" fill="none" />
            </svg>
          </button>
        </div>
        <ImeBar />
      </main>
      <Timeline />
      <div className="flex h-[9px] shrink-0 items-end border-t-2 border-[#b4bab2] bg-[linear-gradient(90deg,#d3e8d0,#dde8c2_4%,#d5e7d6_15%,#dbeabf_25%,#cfe6ea_40%,#c9e6ea_48%,#d5dfcd_55%,#d3e2dc_75%,#cfe3ee)]">
        <span className="ml-[43%] h-[4px] w-12 rounded-t-md bg-[#dcc3c6]" />
        <span className="ml-[172px] h-[3px] w-12 rounded-t-md bg-[#e8eee6]" />
      </div>
    </div>
  );
}
